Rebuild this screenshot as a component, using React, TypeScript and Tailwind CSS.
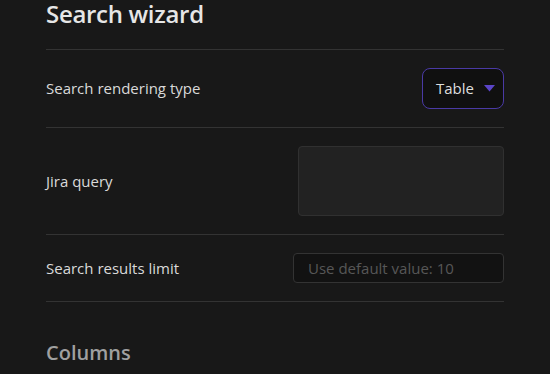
export default function App() {
  const font = { fontFamily: '"Open Sans", "Noto Sans", sans-serif' };
  return (
    <div className="min-h-screen w-full bg-[#181818] px-[46px] text-[#dadada]" style={font}>
      <h2 className="pb-[21px] text-[24px] font-semibold leading-[28px] tracking-[-0.3px] text-[#e6e6e6]">Search wizard</h2>

      <div className="flex items-center justify-between border-t border-[#333] py-[18px]">
        <span className="text-[15px]">Search rendering type</span>
        <button className="flex h-[41px] w-[82px] items-center gap-[10px] rounded-[8px] border border-[#4a3aa5] bg-[#101010] pl-[13px] text-[15px] text-[#dedede]">
          Table
          <svg width="11" height="7" viewBox="0 0 11 7">
            <path d="M0 0 H11 L5.5 6.5 Z" fill="#5b45c9" />
          </svg>
        </button>
      </div>

      <div className="flex items-center justify-between border-t border-[#333] py-[18px]">
        <span className="text-[15px]">Jira query</span>
        <div className="h-[70px] w-[206px] rounded-[4px] border border-[#303030] bg-[#222222]" />
      </div>

      <div className="flex items-center justify-between border-t border-[#333] py-[18px]">
        <span className="text-[15px]">Search results limit</span>
        <div className="flex h-[30px] w-[211px] items-center rounded-[4px] border border-[#333] bg-[#121212] px-[14px] text-[15px] text-[#575757]">
          Use default value: 10
        </div>
      </div>

      <div className="border-t border-[#333] pt-[36px]">
        <h3 className="text-[20px] font-semibold text-[#a0a0a0]">Columns</h3>
      </div>
    </div>
  );
}
